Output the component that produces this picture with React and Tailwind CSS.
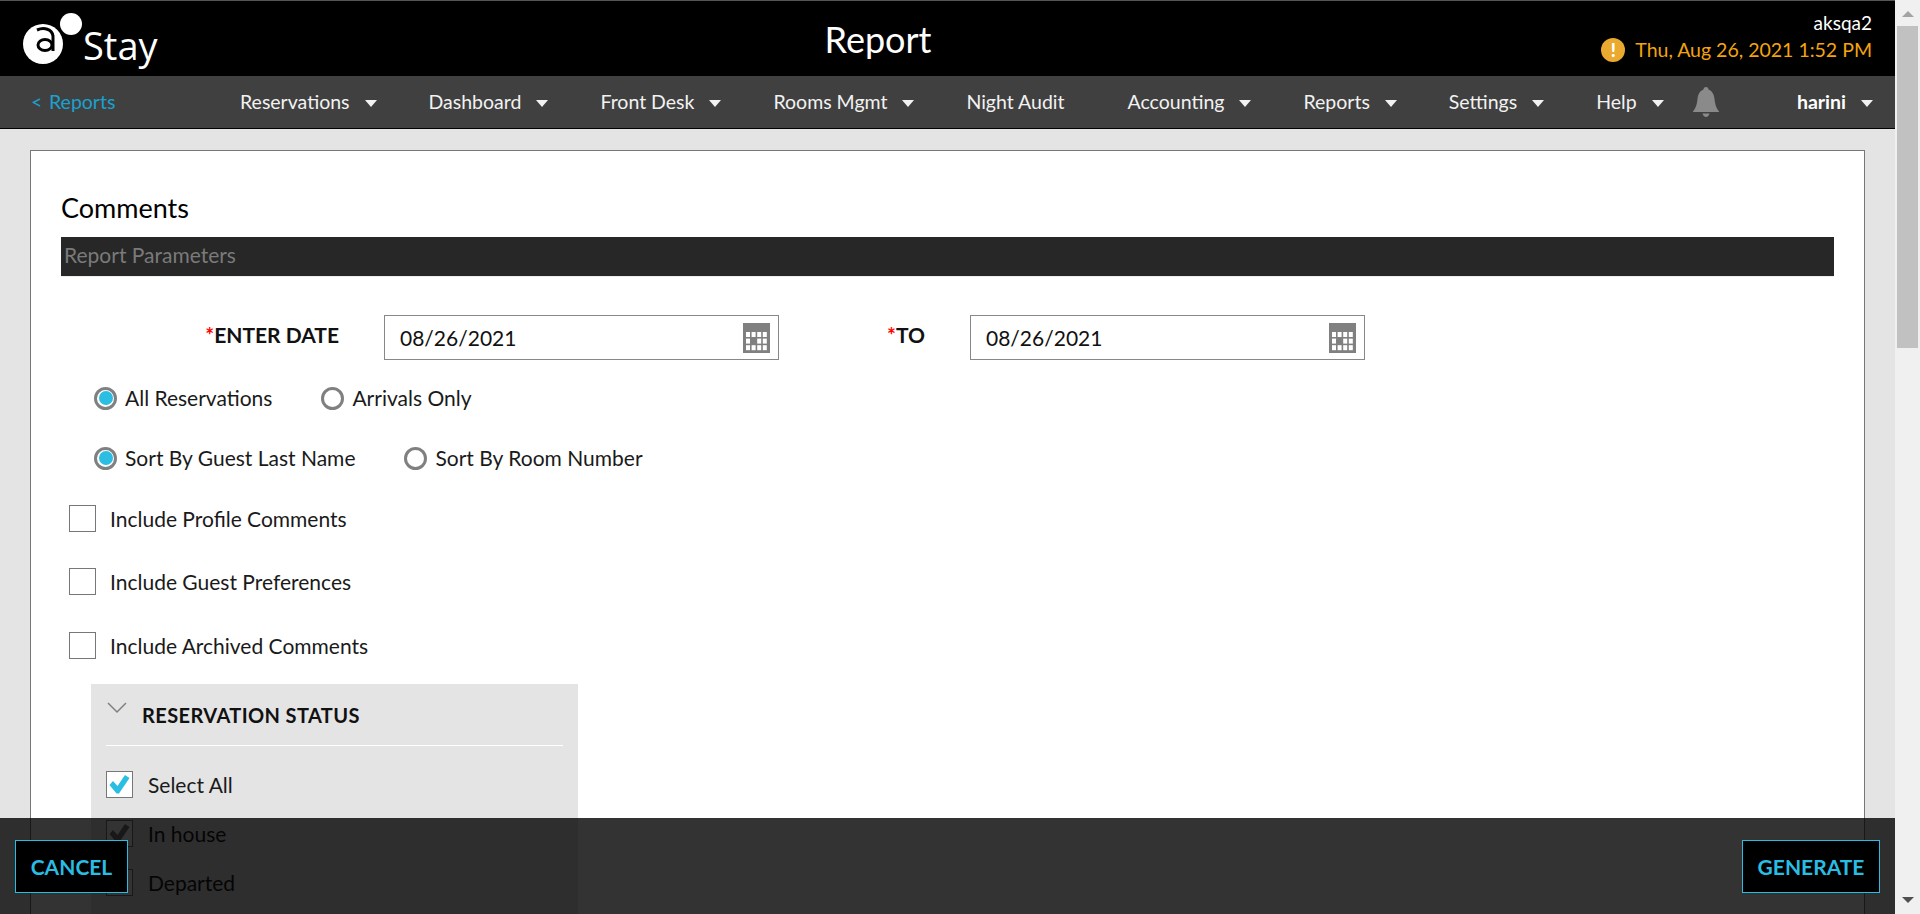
const NAV = [
  { label: "Reservations", caret: true },
  { label: "Dashboard", caret: true },
  { label: "Front Desk", caret: true },
  { label: "Rooms Mgmt", caret: true },
  { label: "Night Audit", extra: "mr-[11px]" },
  { label: "Accounting", caret: true },
  { label: "Reports", caret: true },
  { label: "Settings", caret: true },
  { label: "Help", caret: true },
];

const Caret = () => (
  <span className="ml-[15px] mt-[3px] h-0 w-0 border-x-[6px] border-t-[7px] border-x-transparent border-t-[#f2f2f2]" />
);

function Logo() {
  return (
    <svg width="70" height="66" viewBox="0 0 70 66" className="shrink-0">
      <circle cx="23" cy="43" r="20" fill="#fff" />
      <circle cx="51" cy="23" r="12" fill="#000" />
      <circle cx="51" cy="23" r="11" fill="#fff" />
      <path d="M17 29C24 26 32 28 33 35V50" fill="none" stroke="#000" strokeWidth="3" />
      <ellipse cx="25" cy="44" rx="7" ry="5.500" fill="none" stroke="#000" strokeWidth="3" />
    </svg>
  );
}

function BellIcon() {
  return (
    <svg width="26" height="30" viewBox="0 0 26 30" className="shrink-0" fill="#8a8a8a">
      <path d="M13 0c-1.500 0-2.500 1-2.500 2.500C6.500 4 5 7.500 4.500 12c-.5 5-1.500 9-4.500 12.500V25h26v-.5c-3-3.500-4-7.500-4.500-12.500C21 7.500 19.500 4 15.500 2.500 15.500 1 14.500 0 13 0z" />
      <path d="M9.500 26.500h7c-.5 2-2 3.500-3.500 3.500s-3-1.500-3.500-3.500z" />
    </svg>
  );
}

function CalendarIcon() {
  const cells = [];
  for (let r = 0; r < 3; r++) {
    for (let c = 0; c < 4; c++) {
      if (r === 1 && c === 1) continue;
      cells.push(<rect key={`${r}-${c}`} x={3 + c * 5.6} y={9 + r * 6.6} width="4" height="5" fill="#fff" />);
    }
  }
  return (
    <svg width="27" height="30" viewBox="0 0 27 30" className="shrink-0">
      <rect width="27" height="30" fill="#808080" />
      {cells}
    </svg>
  );
}

function DateField({ value }) {
  return (
    <div className="flex h-[45px] w-[395px] items-center justify-between border border-[#888] pl-[15px] pr-[8px] text-[21px] text-[#111]">
      <span>{value}</span>
      <CalendarIcon />
    </div>
  );
}

function Radio({ checked, label }) {
  return (
    <div className="flex items-center gap-[8px]">
      <span className="flex h-[23px] w-[23px] items-center justify-center rounded-full border-[3px] border-[#808080] bg-white">
        {checked && <span className="h-[14px] w-[14px] rounded-full bg-[#2bbde2]" />}
      </span>
      <span className="text-[21px] leading-[24px] text-[#1a1a1a]">{label}</span>
    </div>
  );
}

function CheckRow({ label, className }) {
  return (
    <div className={`flex h-[27px] items-center gap-[14px] ${className}`}>
      <span className="h-[27px] w-[27px] border border-[#777] bg-white" />
      <span className="text-[21px] leading-[24px] text-[#1a1a1a]">{label}</span>
    </div>
  );
}

function StatusRow({ label, checked, tick }) {
  return (
    <div className="flex h-[27px] items-center gap-[15px]">
      <span className="h-[27px] w-[27px] border border-[#777] bg-white">
        {checked && (
          <svg width="25" height="25" viewBox="1 1 25 25">
            <path d="M3.500 14L7 10l4.500 5L19 4l4.500 3L13 22.500h-2.500z" fill={tick} />
          </svg>
        )}
      </span>
      <span className="text-[21px] leading-[24px] text-[#1a1a1a]">{label}</span>
    </div>
  );
}

function Scrollbar() {
  return (
    <div className="flex w-[25px] shrink-0 flex-col items-center bg-[#f0f0f0]">
      <span className="mt-[11px] h-0 w-0 border-x-[6px] border-b-[6px] border-x-transparent border-b-[#a3a3a3]" />
      <div className="mt-[9px] h-[322px] w-[21px] bg-[#c1c1c1]" />
      <span className="mb-[11px] mt-auto h-0 w-0 border-x-[6px] border-t-[6px] border-x-transparent border-t-[#505050]" />
    </div>
  );
}

export default function App() {
  return (
    <div className="flex h-screen w-full overflow-hidden bg-[#f0f0f0] font-['Lato',sans-serif]">
      <div className="relative min-w-0 flex-1 overflow-hidden bg-[#e4e4e4]">
        {/* Top bar */}
        <div className="flex h-[76px] border-t border-[#555] bg-black">
          <div className="flex w-[760px] items-start pl-[20px]">
            <Logo />
            <span className="ml-[-7px] mt-[14px] font-['Open_Sans',sans-serif] text-[38px] leading-[60px] text-white">Stay</span>
          </div>
          <div className="w-[236px] pt-[14px] text-center text-[36px] leading-[48px] text-white">Report</div>
          <div className="flex flex-1 flex-col items-end pr-[23px] pt-[10px]">
            <span className="text-[19px] leading-[24px] text-white">aksqa2</span>
            <div className="mt-[2px] flex items-center gap-[10px]">
              <span className="flex h-[24px] w-[24px] items-center justify-center rounded-full bg-[#e9aa2f] text-[18px] font-black leading-none text-white">!</span>
              <span className="text-[19.500px] leading-[26px] text-[#f5a40d]">Thu, Aug 26, 2021 1:52 PM</span>
            </div>
          </div>
        </div>

        {/* Nav */}
        <div className="flex h-[53px] items-center border-b border-black bg-[#404040] pr-[22px] text-[19.500px] text-[#f2f2f2]">
          <div className="flex w-[240px] pl-[31px] text-[#1ba1cf]">
            <span className="w-[18px]">&lt;</span>
            <span>Reports</span>
          </div>
          <div className="flex items-center gap-[52px]">
            {NAV.map((item) => (
              <div key={item.label} className={`flex items-center ${item.extra || ""}`}>
                <span>{item.label}</span>
                {item.caret && <Caret />}
              </div>
            ))}
          </div>
          <div className="ml-[29px]">
            <BellIcon />
          </div>
          <div className="ml-auto flex items-center font-bold text-white">
            <span>harini</span>
            <Caret />
          </div>
        </div>

        {/* Card */}
        <div className="mx-[30px] mt-[21px] border border-[#777] bg-white px-[30px] pb-[40px]">
          <div className="pt-[39px] pb-[1px] text-[27px] leading-[36px] text-black">Comments</div>
          <div className="mt-[10px] flex h-[40px] items-center border-b border-[#eee] bg-[#272727] pb-[3px] pl-[3px] text-[21px] text-[#7a7a7a]">
            Report Parameters
          </div>

          <div className="mt-[38px] flex items-center">
            <div className="w-[278px] pb-[5px] text-right text-[21px] font-bold text-[#111]"><span className="text-[#f00]">*</span>ENTER DATE</div>
            <div className="ml-[45px]"><DateField value="08/26/2021" /></div>
            <div className="w-[146px] pb-[5px] text-right text-[21px] font-bold text-[#111]"><span className="text-[#f00]">*</span>TO</div>
            <div className="ml-[45px]"><DateField value="08/26/2021" /></div>
          </div>

          <div className="ml-[33px] mt-[26px] flex gap-[49px]">
            <Radio checked label="All Reservations" />
            <Radio label="Arrivals Only" />
          </div>
          <div className="ml-[33px] mt-[36px] flex gap-[49px]">
            <Radio checked label="Sort By Guest Last Name" />
            <Radio label="Sort By Room Number" />
          </div>

          <CheckRow label="Include Profile Comments" className="ml-[8px] mt-[35px]" />
          <CheckRow label="Include Guest Preferences" className="ml-[8px] mt-[36px]" />
          <CheckRow label="Include Archived Comments" className="ml-[8px] mt-[37px]" />

          <div className="ml-[30px] mt-[25px] w-[487px] bg-[#e4e4e4] px-[15px] pb-[30px]">
            <div className="flex h-[62px] items-center border-b border-white pt-[1px]">
              <svg width="20" height="12" viewBox="0 0 20 12" className="mb-[14px] ml-[1px] shrink-0">
                <path d="M1 1l9 9 9-9" fill="none" stroke="#808080" strokeWidth="1.500" />
              </svg>
              <span className="ml-[15px] text-[20px] font-bold tracking-[0.4px] text-[#111]">RESERVATION STATUS</span>
            </div>
            <div className="mt-[25px] flex flex-col gap-[22px]">
              <StatusRow label="Select All" checked tick="#2bbde2" />
              <StatusRow label="In house" checked tick="#777" />
              <StatusRow label="Departed" />
            </div>
          </div>
        </div>

        {/* Footer actions */}
        <div className="absolute inset-x-0 bottom-0 flex h-[96px] items-start justify-between bg-black/80 pl-[15px] pr-[15px] pt-[22px]">
          <button className="h-[53px] w-[113px] border border-[#29bde3] bg-black text-[21px] font-bold text-[#29bde3]">CANCEL</button>
          <button className="h-[53px] w-[138px] border border-[#29bde3] bg-black text-[21px] font-bold text-[#29bde3]">GENERATE</button>
        </div>
      </div>
      <Scrollbar />
    </div>
  );
}
